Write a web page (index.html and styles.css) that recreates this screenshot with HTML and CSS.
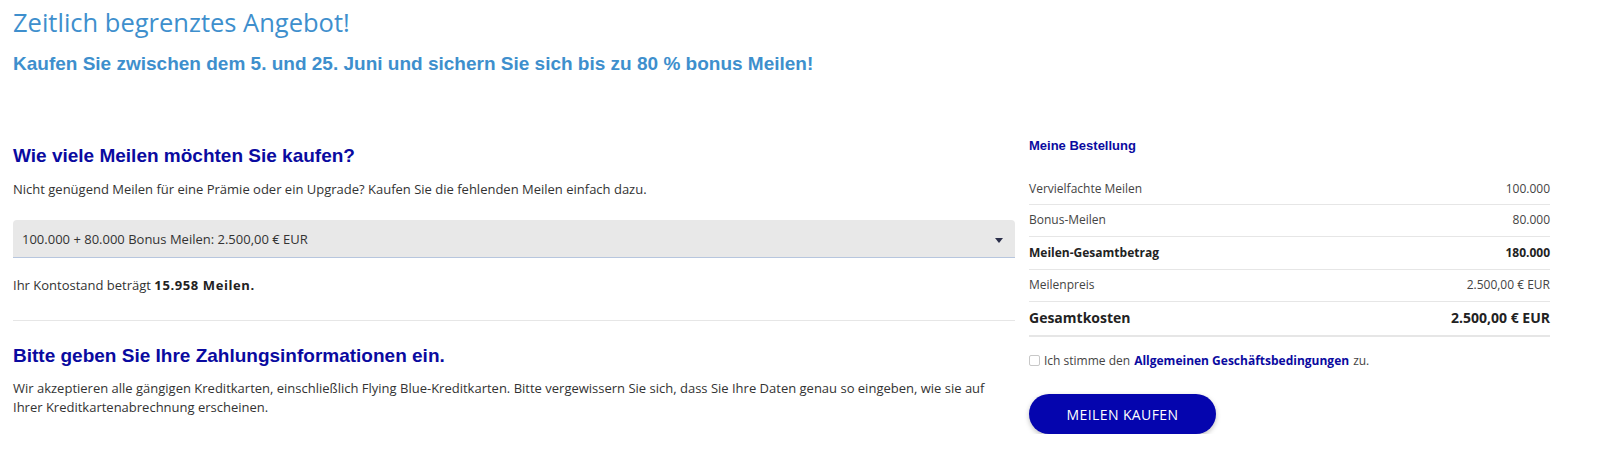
FILE: index.html
```html
<!DOCTYPE html>
<html lang="de">
<head>
<meta charset="utf-8">
<title>Meilen kaufen</title>
<link rel="stylesheet" href="styles.css">
</head>
<body>
<div class="page">
  <header class="promo">
    <h1 class="promo-title">Zeitlich begrenztes Angebot!</h1>
    <h2 class="promo-sub">Kaufen Sie zwischen dem 5. und 25. Juni und sichern Sie sich bis zu 80 % bonus Meilen!</h2>
  </header>
  <div class="layout">
    <main class="main">
      <section class="block">
        <h3 class="section-title">Wie viele Meilen möchten Sie kaufen?</h3>
        <p class="text">Nicht genügend Meilen für eine Prämie oder ein Upgrade? Kaufen Sie die fehlenden Meilen einfach dazu.</p>
        <div class="select">
          <span>100.000 + 80.000 Bonus Meilen: 2.500,00 € EUR</span>
          <span class="caret"></span>
        </div>
        <p class="text balance">Ihr Kontostand beträgt <strong>15.958 Meilen.</strong></p>
      </section>
      <hr class="divider">
      <section class="block">
        <h3 class="section-title">Bitte geben Sie Ihre Zahlungsinformationen ein.</h3>
        <p class="text payment">Wir akzeptieren alle gängigen Kreditkarten, einschließlich Flying Blue-Kreditkarten. Bitte vergewissern Sie sich, dass Sie Ihre Daten genau so eingeben, wie sie auf Ihrer Kreditkartenabrechnung erscheinen.</p>
      </section>
    </main>
    <aside class="order">
      <h4 class="order-title">Meine Bestellung</h4>
      <ul class="order-list">
        <li class="row"><span>Vervielfachte Meilen</span><span>100.000</span></li>
        <li class="row"><span>Bonus-Meilen</span><span>80.000</span></li>
        <li class="row bold"><span>Meilen-Gesamtbetrag</span><span>180.000</span></li>
        <li class="row"><span>Meilenpreis</span><span>2.500,00 € EUR</span></li>
        <li class="row total"><span>Gesamtkosten</span><span>2.500,00 € EUR</span></li>
      </ul>
      <label class="terms"><span class="checkbox"></span>Ich stimme den <a href="#" class="link">Allgemeinen Geschäftsbedingungen</a> zu.</label>
      <button class="buy" type="button">Meilen kaufen</button>
    </aside>
  </div>
</div>
</body>
</html>
```
FILE: styles.css
```css
* { box-sizing: border-box; }
html, body { margin: 0; padding: 0; background: #fff; overflow: hidden; }
body {
  font-family: "Open Sans", "Liberation Sans", sans-serif;
  color: #333;
  font-size: 13px;
}
.page { padding: 0 50px 0 13px; }

.promo-title {
  margin: 0;
  padding-top: 5px;
  font-family: "Open Sans", sans-serif;
  font-weight: 400;
  font-size: 25.5px;
  line-height: 34px;
  color: #3e8fcd;
}
.promo-sub {
  margin: 14px 0 0;
  font-family: "Liberation Sans", Arial, sans-serif;
  font-weight: 700;
  font-size: 19px;
  line-height: 22px;
  color: #3e8fcd;
}

.layout {
  display: grid;
  grid-template-columns: minmax(0, 1fr) 521px;
  column-gap: 14px;
  margin-top: 56px;
}
.main { padding-top: 13px; }

.section-title {
  margin: 0;
  font-family: "Liberation Sans", Arial, sans-serif;
  font-weight: 700;
  font-size: 19px;
  line-height: 24px;
  color: #0a0aa0;
}
.text { margin: 0; font-size: 13px; line-height: 20px; color: #333; }
.block > .section-title + .text { margin-top: 11px; }

.select {
  margin-top: 21px;
  height: 38px;
  background: #e8e8e8;
  border-radius: 4px 4px 0 0;
  border-bottom: 1px solid #b7c6de;
  display: flex;
  align-items: center;
  justify-content: space-between;
  padding: 0 12px 0 9px;
  font-size: 13px;
  color: #333;
}
.caret {
  width: 0; height: 0;
  border-left: 4.5px solid transparent;
  border-right: 4.5px solid transparent;
  border-top: 5px solid #2b2f4a;
  margin-top: 3px;
}
.balance { margin-top: 17px; }
.balance strong { font-weight: 700; letter-spacing: 0.6px; color: #222; }

.divider {
  border: 0;
  border-top: 1px solid #e6e6e6;
  margin: 25px 0 23px;
}
.block > .section-title + .payment { margin-top: 11px; line-height: 19px; }

.order { padding-top: 6px; }
.order-title {
  margin: 0;
  font-family: "Liberation Sans", Arial, sans-serif;
  font-weight: 700;
  font-size: 13px;
  line-height: 18px;
  color: #0a0aa0;
}
.order-list { list-style: none; margin: 20px 0 0; padding: 0; }
.row {
  display: flex;
  justify-content: space-between;
  align-items: center;
  height: 32px;
  border-bottom: 1px solid #e6e6e6;
  font-size: 12px;
  color: #444;
  padding-bottom: 2px;
}
.row:first-child { height: 30px; }
.row.bold { font-weight: 700; color: #222; height: 33px; }
.row.total { font-weight: 700; font-size: 14px; color: #222; height: 35px; border-bottom: 2px solid #e6e6e6; }

.terms {
  display: flex;
  align-items: center;
  margin-top: 15px;
  font-size: 12px;
  color: #444;
}
.checkbox {
  width: 11px; height: 11px;
  border: 1px solid #c8c8c8;
  border-radius: 2px;
  background: #fff;
  margin-right: 4px;
}
.link { color: #0a0aa0; font-weight: 700; text-decoration: none; margin: 0 4px; }

.buy {
  display: block;
  margin-top: 25px;
  width: 187px;
  height: 40px;
  border: 0;
  border-radius: 20px;
  background: #0505ae;
  color: #fff;
  font-family: "Open Sans", sans-serif;
  font-size: 14px;
  font-weight: 500;
  letter-spacing: 0.4px;
  text-transform: uppercase;
  box-shadow: 0 2px 5px rgba(0,0,0,0.25);
}
```
